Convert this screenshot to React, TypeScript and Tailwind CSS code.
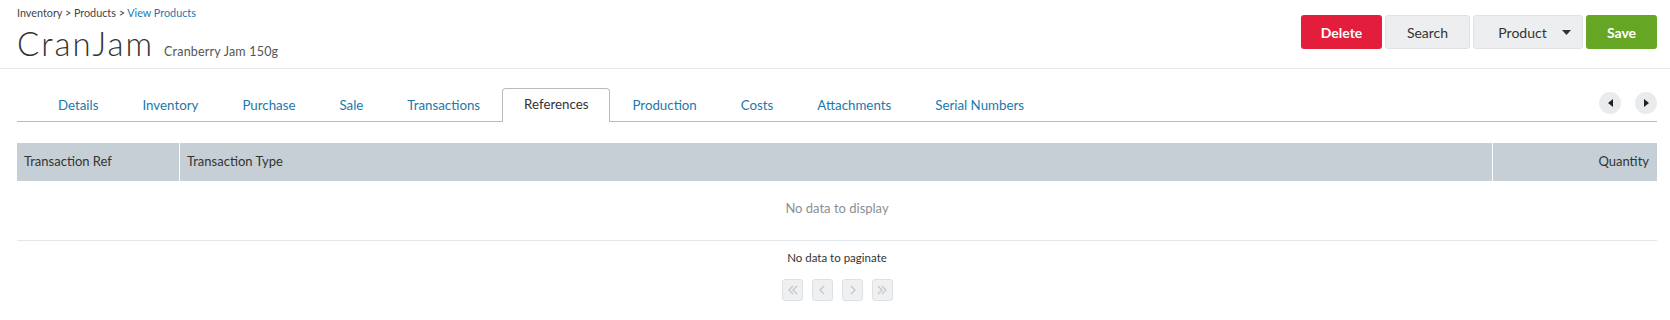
import React from 'react';

const tabs = [
    'Details',
    'Inventory',
    'Purchase',
    'Sale',
    'Transactions',
    'References',
    'Production',
    'Costs',
    'Attachments',
    'Serial Numbers',
];

function Caret({ dir }: { dir: 'left' | 'right' | 'down' }) {
    if (dir === 'down') {
        return (
            <svg width="9" height="5" viewBox="0 0 9 5">
                <path d="M0 0h9L4.5 5z" fill="#333" />
            </svg>
        );
    }
    return (
        <svg width="5" height="8" viewBox="0 0 5 8">
            {dir === 'left' ? <path d="M5 0v8L0 4z" fill="#222" /> : <path d="M0 0v8l5-4z" fill="#222" />}
        </svg>
    );
}

function PagerIcon({ kind }: { kind: 'first' | 'prev' | 'next' | 'last' }) {
    const d = {
        first: 'M7 2L3 6l4 4M11 2L7 6l4 4',
        prev: 'M8 2L4 6l4 4',
        next: 'M5 2l4 4-4 4',
        last: 'M2 2l4 4-4 4M6 2l4 4-4 4',
    }[kind];
    return (
        <svg width="13" height="12" viewBox="0 0 13 12" fill="none" stroke="#c3c9ce" strokeWidth="1.4">
            <path d={d} />
        </svg>
    );
}

export default function App() {
    return (
        <div className="w-[1670px] h-[320px] bg-white text-[#333] overflow-hidden" style={{ fontFamily: 'Lato, "Liberation Sans", sans-serif' }}>
            {/* Page header */}
            <div className="h-[69px] flex justify-between border-b border-[#e2e7ea] pl-[17px] pr-[13px]">
                <div className="pt-[5px]">
                    <div className="text-[10.8px] leading-[16px] text-[#444]">
                        Inventory &gt; Products &gt; <span className="text-[#1a78ad]">View Products</span>
                    </div>
                    <div className="flex items-baseline mt-[2px]">
                        <h1 className="text-[33px] leading-[40px] font-light text-[#333] tracking-[2px]">CranJam</h1>
                        <span className="ml-[10px] text-[12.5px] text-[#555] tracking-[0.2px]">Cranberry Jam 150g</span>
                    </div>
                </div>
                <div className="flex gap-[3px] pt-[15px] h-[49px] box-content">
                    <button className="w-[81px] h-[34px] rounded-[3px] bg-[#e31d3c] text-white text-[14px] font-bold">Delete</button>
                    <button className="w-[85px] h-[34px] rounded-[3px] bg-[#eceef0] border border-[#dfe2e5] text-[14px] text-[#333]">Search</button>
                    <button className="w-[110px] h-[34px] rounded-[3px] bg-[#eceef0] border border-[#dfe2e5] text-[14px] text-[#333] flex items-center pl-[21px] pr-[11px]">
                        <span className="flex-1 text-center">Product</span>
                        <span className="ml-[12px]"><Caret dir="down" /></span>
                    </button>
                    <button className="w-[71px] h-[34px] rounded-[3px] bg-[#65a624] text-white text-[14px] font-bold">Save</button>
                </div>
            </div>

            <div className="pl-[17px] pr-[13px]">
                {/* Tabs */}
                <div className="mt-[19px] flex items-end border-b border-[#bbbbbb]">
                    <div className="flex ml-[19px]">
                        {tabs.map((t) => {
                            const active = t === 'References';
                            return (
                                <div
                                    key={t}
                                    className={`h-[34px] px-[21px] flex items-center text-[13.3px] border border-b-0 rounded-t-[4px] -mb-px ${
                                        active
                                            ? 'border-[#bbbbbb] bg-white text-[#333] pb-px'
                                            : 'border-transparent text-[#1b78ab]'
                                    }`}
                                >
                                    {t}
                                </div>
                            );
                        })}
                    </div>
                    <div className="ml-auto flex gap-[14px] pb-[7px]">
                        <button className="w-[22px] h-[22px] rounded-full bg-[#e9ebed] flex items-center justify-center">
                            <Caret dir="left" />
                        </button>
                        <button className="w-[22px] h-[22px] rounded-full bg-[#e9ebed] flex items-center justify-center">
                            <Caret dir="right" />
                        </button>
                    </div>
                </div>

                {/* Table */}
                <div className="mt-[21px]">
                    <div className="flex h-[38px] bg-[#c6cfd6] text-[13px] text-[#333]">
                        <div className="w-[163px] px-[7px] flex items-center border-r border-white">Transaction Ref</div>
                        <div className="flex-1 px-[7px] flex items-center border-r border-white">Transaction Type</div>
                        <div className="w-[164px] px-[8px] flex items-center justify-end">Quantity</div>
                    </div>
                    <div className="h-[60px] flex items-center justify-center border-b border-[#e2e7ea] text-[13px] text-[#8a8f94] pb-[3px]">
                        No data to display
                    </div>
                    <div className="flex flex-col items-center">
                        <div className="mt-[9px] text-[11.5px] leading-[16px] text-[#333]">No data to paginate</div>
                        <div className="mt-[13px] flex gap-[9px]">
                            {(['first', 'prev', 'next', 'last'] as const).map((k) => (
                                <div key={k} className="w-[21px] h-[22px] rounded-[3px] bg-[#eef0f2] border border-[#dde1e4] flex items-center justify-center">
                                    <PagerIcon kind={k} />
                                </div>
                            ))}
                        </div>
                    </div>
                </div>
            </div>
        </div>
    );
}
